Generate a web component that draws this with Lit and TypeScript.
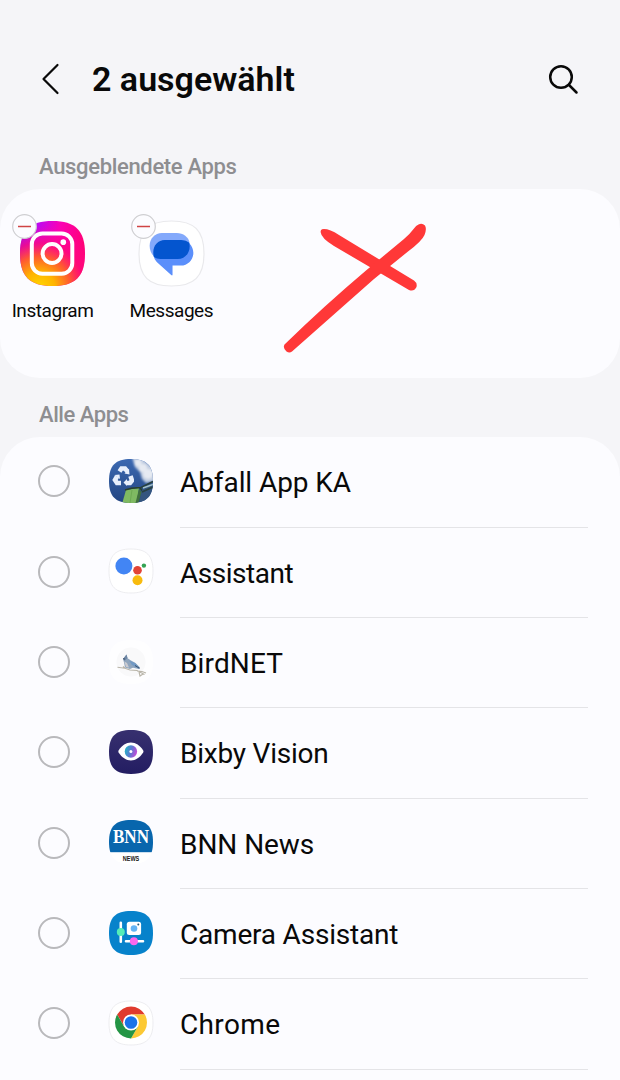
import { LitElement, html, css, svg, SVGTemplateResult } from 'lit';
import { customElement, property } from 'lit/decorators.js';

const SQUIRCLE = 'M22 0C37.5 0 44 6.500 44 22S37.500 44 22 44 0 37.500 0 22 6.500 0 22 0Z';

const ICONS: Record<string, SVGTemplateResult> = {
	instagram: svg`
		<defs>
			<linearGradient id="ig" x1="0" y1="0" x2="1" y2="0.25">
				<stop offset="0" stop-color="#7a10ff" />
				<stop offset="0.25" stop-color="#b90bf5" />
				<stop offset="0.6" stop-color="#fb02b4" />
				<stop offset="1" stop-color="#ff0277" />
			</linearGradient>
			<radialGradient id="ig2" cx="0.3" cy="1.02" r="0.95">
				<stop offset="0" stop-color="#ffd600" />
				<stop offset="0.25" stop-color="#ffb400" />
				<stop offset="0.5" stop-color="#ff5a30" />
				<stop offset="0.72" stop-color="#ff0a78" stop-opacity="0.75" />
				<stop offset="1" stop-color="#ff0a9a" stop-opacity="0" />
			</radialGradient>
		</defs>
		<rect width="44" height="44" fill="url(#ig)" />
		<rect width="44" height="44" fill="url(#ig2)" />
		<g fill="none" stroke="#fff" stroke-width="2.700">
			<rect x="8" y="8.500" width="27.400" height="27.200" rx="7.200" />
			<circle cx="21.700" cy="22" r="6.400" />
		</g>
		<circle cx="29.300" cy="14.300" r="1.900" fill="#fff" />
	`,
	messages: svg`
		<rect width="44" height="44" fill="#fff" />
		<path d="M15.500 8.200H25.500C30 8.200 33.500 10.800 34.300 15L30 25.800H15C10.500 25.800 7.200 21.800 7.200 16.800C7.200 12 10.800 8.200 15.500 8.200Z" fill="#83a9fb" />
		<path d="M18.500 12.800H28.300C33.200 12.800 36.800 16.800 36.800 21.500S33.200 30.200 28.300 30.200H22.700V36.300Q22.600 37.200 21.800 36.600L12 27.800Q9.800 25.500 9.800 21.500C9.800 16.500 13.500 12.800 18.500 12.800Z" fill="#5b8ffb" />
		<path d="M17.500 12.800H28.500Q32 12.900 33.800 14.500Q34.300 15.500 34.300 17.200C34.300 22 30.800 25.800 26.200 25.800H14.500Q12 25.700 10 24.300Q9.700 23 9.700 21C9.700 16.300 13 12.800 17.500 12.800Z" fill="#0455cf" />
	`,
	abfall: svg`
		<defs>
			<linearGradient id="sky" x1="0" y1="0" x2="0" y2="1">
				<stop offset="0" stop-color="#3c69b2" />
				<stop offset="1" stop-color="#234581" />
			</linearGradient>
			<filter id="cloud"><feGaussianBlur stdDeviation="0.900" /></filter>
			<filter id="puff"><feGaussianBlur stdDeviation="0.450" /></filter>
		</defs>
		<rect width="44" height="44" fill="url(#sky)" />
		<g filter="url(#cloud)" fill="#e6eaf2">
			<path d="M23 -2H46V22L37 24L33 20L31 13L26 8Z" fill="#c3cfe2" />
			<circle cx="29" cy="4" r="3.500" />
			<circle cx="34" cy="9" r="4" />
			<circle cx="39" cy="15" r="5" />
			<path d="M34 1L44 3L41 7Z" fill="#7e98c4" />
		</g>
		<g filter="url(#puff)" stroke="#e8effc" fill="#e8effc">
			<path d="M10.500 12.500L12.500 9.500H16L18.500 12.500M21.500 17L23 21.500L21 24H18M12 24H8L6 21L8 17.500" fill="none" stroke-width="4.600" />
			<path d="M20 10L20.500 15.500L15.500 14.500ZM18 20V27L14.500 23.500ZM5.500 16L10.500 15.500L11 20Z" stroke="none" />
		</g>
		<path d="M33 30L44 25V44H30Z" fill="#34557f" />
		<path d="M31 29L44 22.500M33 33L44 28" stroke="#28403f" stroke-width="1.800" />
		<path d="M34 29L44 25.500" stroke="#a4c1c9" stroke-width="1.400" />
		<path d="M17 31L30 29L27.500 45H13Z" fill="#7fb962" />
		<path d="M23 31L21 44" stroke="#6da952" stroke-width="1" />
		<path d="M30 30L32.500 33L29.500 44H26.500Z" fill="#41703d" />
		<path d="M16 31Q24 28.200 31 28.800L33 31.500" fill="none" stroke="#2a412a" stroke-width="1.400" />
	`,
	assistant: svg`
		<rect width="44" height="44" fill="#fff" />
		<circle cx="14.900" cy="17.100" r="8.500" fill="#4285f4" />
		<circle cx="28.500" cy="21.200" r="4.300" fill="#e24436" />
		<circle cx="28.500" cy="31.300" r="5" fill="#f8bb0e" />
		<circle cx="34.900" cy="16.600" r="2.200" fill="#34a353" />
	`,
	birdnet: svg`
		<rect width="44" height="44" fill="#fefeff" />
		<circle cx="22" cy="22" r="14.500" fill="#f9f9fa" />
		<path d="M8.500 27.300L16 28.300L21 30L28 30.500L35.500 34.500M28 31L33 31.500L37 33M30 32L31 36L34 34M16 28L14 26.500" fill="none" stroke="#b9b5a9" stroke-width="1.100" />
		<path d="M14 19L17.500 14.500L18.600 18.200L22 20.500L26.500 23L31 27.500L30 29L24 27.800L21 29L16 27.500L15 22.500Z" fill="#8fa5bd" />
		<path d="M17.500 14.500L14.500 18.500L15.500 21L18.500 18Z" fill="#6d86a3" />
		<path d="M15.300 21.500L18 23L20 27.500L17 27Z" fill="#cbcbd0" />
		<path d="M20 20.500L26 23L30.500 27.500L29.800 28.800L23 25Z" fill="#7199c4" />
		<path d="M26 25.500L30.500 28.300M14 18.700L16 19.100" stroke="#3b506b" stroke-width="1" />
	`,
	bixby: svg`
		<defs>
			<linearGradient id="bx" x1="0" y1="0" x2="0" y2="1">
				<stop offset="0" stop-color="#37306f" />
				<stop offset="1" stop-color="#231d62" />
			</linearGradient>
			<linearGradient id="iris" x1="0" y1="0.300" x2="1" y2="0.600">
				<stop offset="0" stop-color="#23b5c4" />
				<stop offset="0.500" stop-color="#5c78d0" />
				<stop offset="1" stop-color="#c848d8" />
			</linearGradient>
		</defs>
		<rect width="44" height="44" fill="url(#bx)" />
		<path d="M9.600 20.500C13 15.400 17 12.600 21.900 12.600S30.800 15.400 34.200 20.500Q34.800 21.500 34.200 22.500C30.800 27.600 26.800 30.400 21.900 30.400S13 27.600 9.600 22.500Q9 21.500 9.600 20.500Z" fill="#fff" />
		<circle cx="21.900" cy="21.500" r="6.200" fill="url(#iris)" />
		<circle cx="21.900" cy="21.500" r="1.500" fill="#fff" />
	`,
	bnn: svg`
		<rect width="44" height="44" fill="#fff" />
		<rect width="44" height="32.200" fill="#0866ad" />
		<text x="22" y="23.200" text-anchor="middle" textLength="36" lengthAdjust="spacingAndGlyphs" font-family="Liberation Serif, serif" font-weight="700" font-size="19" fill="#fff">BNN</text>
		<text x="22" y="40.600" text-anchor="middle" textLength="16.500" lengthAdjust="spacingAndGlyphs" font-family="Liberation Sans, sans-serif" font-weight="700" font-size="6.500" fill="#161616">NEWS</text>
	`,
	camera: svg`
		<rect width="44" height="44" fill="#0782cb" />
		<path d="M11.800 11.800V30.700M17 30.200H34" stroke="#fff" stroke-width="2.600" stroke-linecap="round" />
		<rect x="17.800" y="10.800" width="14.300" height="13.300" rx="2.500" fill="#fff" />
		<circle cx="25" cy="17.500" r="3.300" fill="#64b4f4" />
		<circle cx="29.300" cy="13.500" r="1" fill="#245879" />
		<circle cx="11.800" cy="20.900" r="4" fill="#55edb7" />
		<circle cx="24.900" cy="30.200" r="4" fill="#fb68ed" />
	`,
	chrome: svg`
		<rect width="44" height="44" fill="#fff" />
		<path d="M8.150 13.500A16 16 0 0 1 35.850 13.500H22L15.100 25.500Z" fill="#e03b2e" />
		<path d="M22 13.500H35.850A16 16 0 0 1 22 37.500L28.900 25.500Z" fill="#fcc934" />
		<path d="M8.150 13.500A16 16 0 0 0 22 37.500L28.900 25.500L15.100 25.500Z" fill="#249545" />
		<circle cx="22" cy="21.500" r="8" fill="#fff" />
		<circle cx="22" cy="21.500" r="6.300" fill="#1a73e8" />
	`,
};

@customElement('app-icon')
export class AppIcon extends LitElement {
	@property() name = '';
	@property({ type: Boolean }) outlined = false;

	static styles = css`
		:host {
			display: block;
			width: 44px;
			height: 44px;
		}

		svg {
			display: block;
			width: 100%;
			height: 100%;
			overflow: visible;
		}
	`;

	render() {
		return html`
			<svg viewBox="0 0 44 44">
				<clipPath id="shape"><path d=${SQUIRCLE} /></clipPath>
				<g clip-path="url(#shape)">${ICONS[this.name]}</g>
				${this.outlined ? svg`<path d=${SQUIRCLE} fill="none" stroke="#e9e9ec" stroke-width="0.800" />` : ''}
			</svg>
		`;
	}
}

@customElement('app-root')
export class AppRoot extends LitElement {
	hidden_apps = [
		{ icon: 'instagram', name: 'Instagram', outlined: false },
		{ icon: 'messages', name: 'Messages', outlined: true },
	];

	apps = [
		{ icon: 'abfall', name: 'Abfall App KA', outlined: false, tracking: -0.08 },
		{ icon: 'assistant', name: 'Assistant', outlined: true, tracking: -0.48 },
		{ icon: 'birdnet', name: 'BirdNET', outlined: false, tracking: 0.15 },
		{ icon: 'bixby', name: 'Bixby Vision', outlined: false, tracking: -0.22 },
		{ icon: 'bnn', name: 'BNN News', outlined: false, tracking: -0.05 },
		{ icon: 'camera', name: 'Camera Assistant', outlined: false, tracking: -0.2 },
		{ icon: 'chrome', name: 'Chrome', outlined: true, tracking: 0.35 },
	];

	static styles = css`
		:host {
			display: flex;
			flex-direction: column;
			box-sizing: border-box;
			width: 620px;
			height: 1080px;
			overflow: hidden;
			background: #f5f5f8;
			color: #090909;
			font-family: Roboto, "Liberation Sans", sans-serif;
		}

		header {
			display: flex;
			align-items: center;
			height: 78px;
			padding: 40px 40px 0 38px;
			flex: none;
		}

		h1 {
			flex: 1;
			margin: 0 0 0 29px;
			font-size: 34px;
			font-weight: 600;
			line-height: 44px;
		}

		h2 {
			flex: none;
			margin: 0;
			padding-left: 39px;
			font-size: 22px;
			font-weight: 500;
			line-height: 28px;
			letter-spacing: -0.330px;
			color: #8e8e91;
		}

		.first {
			padding-top: 35px;
			height: 36px;
		}

		.second {
			padding-top: 23px;
			height: 35.700px;
			letter-spacing: -0.450px;
		}

		.card {
			flex: none;
			background: #fcfcff;
			border-radius: 40px;
		}

		.hidden {
			position: relative;
			display: flex;
			gap: 13.800px;
			height: 157px;
			padding-top: 32px;
		}

		.tile {
			display: flex;
			flex-direction: column;
			align-items: center;
			width: 105px;
			font-size: 19px;
			line-height: 24px;
			letter-spacing: -0.450px;
		}

		.tile app-icon {
			width: 65px;
			height: 65px;
			margin-bottom: 13px;
		}

		.picture {
			position: relative;
		}

		.minus {
			position: absolute;
			left: -8px;
			top: -7px;
			width: 25px;
			height: 25px;
		}

		.cross {
			position: absolute;
			left: 270px;
			top: 21px;
		}

		.list {
			box-sizing: border-box;
			border-radius: 40px 40px 0 0;
			height: 660px;
			padding-top: 0.600px;
		}

		.row {
			display: flex;
			height: 90.350px;
			padding: 0 32px 0 38px;
		}

		.radio {
			box-sizing: border-box;
			width: 32px;
			height: 32px;
			margin: 28px 38.500px 0 0;
			border: 2.500px solid #b9b9bc;
			border-radius: 50%;
		}

		.row app-icon {
			margin: 21.800px 27.500px 0 0;
		}

		.name {
			flex: 1;
			box-sizing: border-box;
			border-bottom: 1px solid #e4e4e7;
			padding-top: 28px;
			font-size: 28px;
			line-height: 36px;
		}
	`;

	render() {
		return html`
			<header>
				<svg width="25" height="36" viewBox="0 0 25 36" fill="none" stroke="#090909" stroke-width="2.200" stroke-linecap="round" stroke-linejoin="round">
					<path d="M19.500 4L5.500 18L19.500 32" />
				</svg>
				<h1>2 ausgewählt</h1>
				<svg width="34" height="36" viewBox="0 0 34 36" fill="none" stroke="#090909" stroke-width="2.500" stroke-linecap="round">
					<circle cx="15" cy="16" r="10.800" />
					<path d="M23 24L30.500 31.500" />
				</svg>
			</header>
			<h2 class="first">Ausgeblendete Apps</h2>
			<section class="card hidden">
				${this.hidden_apps.map((app) => html`
					<div class="tile">
						<div class="picture">
							<app-icon name=${app.icon} ?outlined=${app.outlined}></app-icon>
							<svg class="minus" viewBox="0 0 25 25">
								<circle cx="12.500" cy="12.500" r="11.800" fill="#fcfcff" stroke="#cfcfd2" stroke-width="1.200" />
								<path d="M6 12.500H19" stroke="#d04444" stroke-width="1.500" />
							</svg>
						</div>
						<span>${app.name}</span>
					</div>
				`)}
				<svg class="cross" width="170" height="160" viewBox="0 0 170 160" fill="#ff3838">
					<path d="M52 19.300Q58 18 69 25L144 70.500Q147.500 73 146.500 77Q144 82 139 80L64 36Q51 28 50.600 22Q50.500 20 52 19.300Z" />
					<path d="M148.500 14.500Q152 12.500 155 15.500Q157 19 154.500 25Q152 31 138 41.500L104 69L22 141.500Q19.500 143.500 16.500 141.500Q12.500 138 14.500 134.500Q54 96 96 60.500L134 29Q139 25 144 18.500Q146 15.500 148.500 14.500Z" />
				</svg>
			</section>
			<h2 class="second">Alle Apps</h2>
			<section class="card list">
				${this.apps.map((app) => html`
					<div class="row">
						<div class="radio"></div>
						<app-icon name=${app.icon} ?outlined=${app.outlined}></app-icon>
						<div class="name" style="letter-spacing: ${app.tracking}px">${app.name}</div>
					</div>
				`)}
			</section>
		`;
	}
}
